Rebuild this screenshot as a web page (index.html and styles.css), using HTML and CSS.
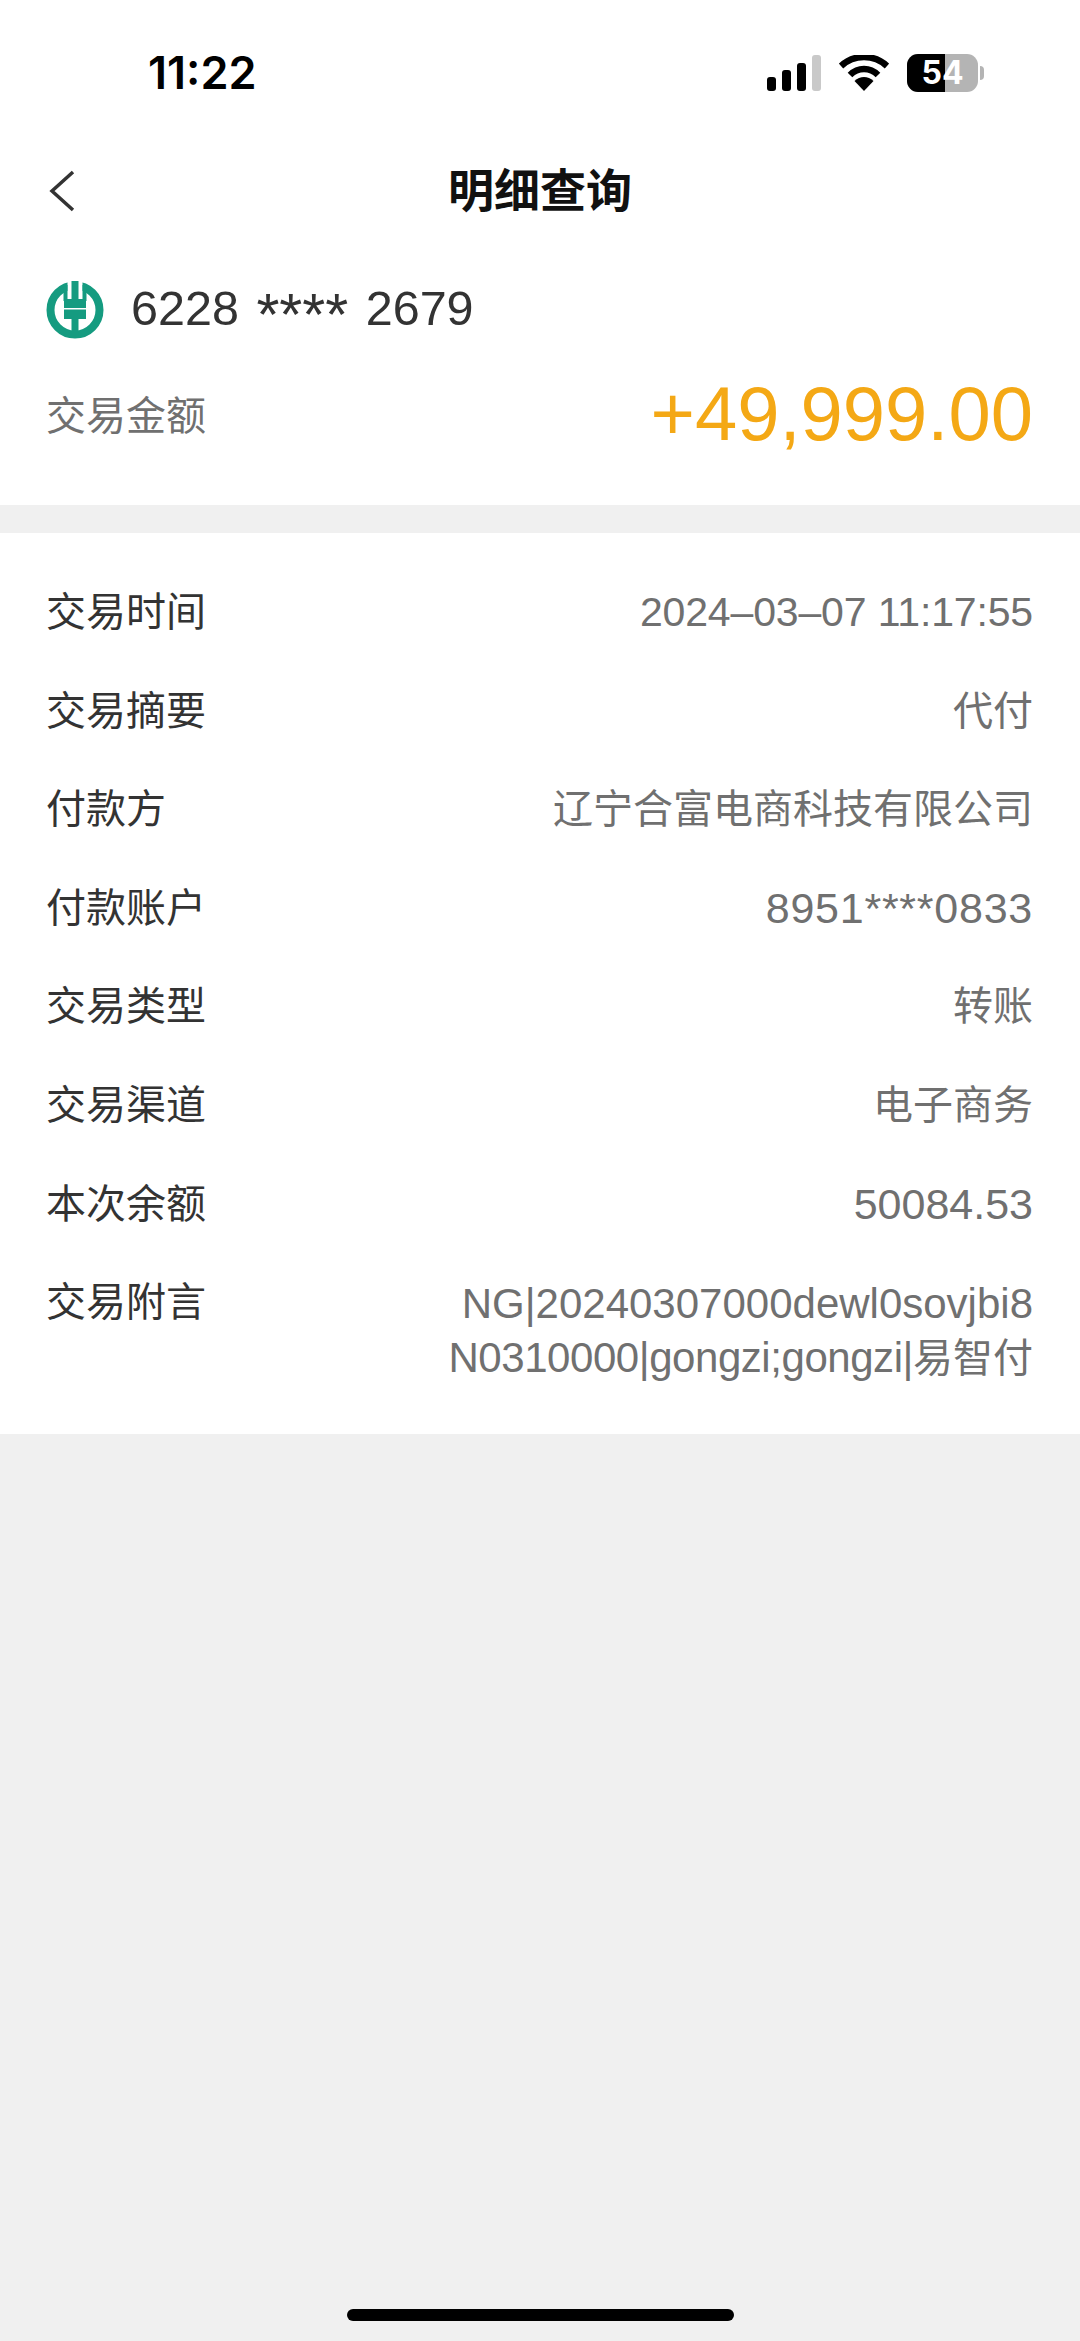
FILE: index.html
```html
<!DOCTYPE html>
<html lang="zh-CN">
<head>
    <meta charset="UTF-8">
    <meta name="viewport" content="width=device-width, initial-scale=1.0">
    <title>明细查询</title>
    <link rel="stylesheet" href="styles.css">
</head>
<body>
    <div class="status-bar">
        <span class="clock">11:22</span>
        <div class="status-icons">
            <svg class="signal" width="54" height="36" viewBox="0 0 54 36">
                <rect x="0" y="22" width="9" height="14" rx="3" fill="#000"/>
                <rect x="15" y="15" width="9" height="21" rx="3" fill="#000"/>
                <rect x="30" y="8" width="9" height="28" rx="3" fill="#000"/>
                <rect x="45" y="0" width="9" height="36" rx="3" fill="#c9c9c9"/>
            </svg>
            <svg class="wifi" width="50" height="36" viewBox="0 0 50 36">
                <path d="M2 11C15 -1 35 -1 48 11" fill="none" stroke="#000" stroke-width="6.5"/>
                <path d="M11 20C19 12 31 12 39 20" fill="none" stroke="#000" stroke-width="6.5"/>
                <path d="M15.500 26C21 20.500 29 20.500 34.500 26L25 36Z" fill="#000"/>
            </svg>
            <div class="battery">
                <div class="battery-body">
                    <span class="battery-level" style="width: 54%"></span>
                    <span class="battery-text">54</span>
                </div>
                <span class="battery-cap"></span>
            </div>
        </div>
    </div>

    <div class="nav-bar">
        <svg class="back" width="26" height="42" viewBox="0 0 26 42">
            <path d="M24 2L3 21L24 40" fill="none" stroke="#333" stroke-width="3.500"/>
        </svg>
        <h1>明细查询</h1>
    </div>

    <div class="card summary">
        <div class="account">
            <svg class="bank-logo" width="58" height="58" viewBox="0 0 58 58">
                <circle cx="29" cy="29" r="24.500" fill="none" stroke="#159b80" stroke-width="8"/>
                <!-- white channels cut through the top of the ring -->
                <rect x="21.500" y="0" width="15" height="18" fill="#fff"/>
                <rect x="17.500" y="4" width="4" height="16" fill="#159b80"/>
                <rect x="36.500" y="4" width="4" height="16" fill="#159b80"/>
                <rect x="25.500" y="0" width="7" height="18" fill="#159b80"/>
                <rect x="18" y="18" width="22" height="9" fill="#159b80"/>
                <rect x="18" y="28.500" width="22" height="9.500" fill="#159b80"/>
                <rect x="25.500" y="38" width="7" height="17" fill="#159b80"/>
            </svg>
            <span class="card-no">6228 <span class="stars">****</span> 2679</span>
        </div>
        <div class="amount-row">
            <span class="amount-label">交易金额</span>
            <span class="amount">+49,999.00</span>
        </div>
    </div>

    <div class="card details">
        <div class="row"><span class="label">交易时间</span><span class="value date">2024–03–07 11:17:55</span></div>
        <div class="row"><span class="label">交易摘要</span><span class="value">代付</span></div>
        <div class="row"><span class="label">付款方</span><span class="value">辽宁合富电商科技有限公司</span></div>
        <div class="row"><span class="label">付款账户</span><span class="value num account-no">8951****0833</span></div>
        <div class="row"><span class="label">交易类型</span><span class="value">转账</span></div>
        <div class="row"><span class="label">交易渠道</span><span class="value">电子商务</span></div>
        <div class="row"><span class="label">本次余额</span><span class="value num">50084.53</span></div>
        <div class="row"><span class="label">交易附言</span><span class="value note">NG|20240307000dewl0sovjbi8<br><span class="note-tight">N0310000|gongzi;gongzi|</span><span class="note-cjk">易智付</span></span></div>
    </div>

    <div class="home-indicator"></div>
</body>
</html>
```

FILE: styles.css
```css
html, body {
    height: 100%;
}

body {
    font-family: "Liberation Sans", "Noto Sans CJK SC", sans-serif;
    background-color: #f0f0f0;
    margin: 0;
    padding: 0;
    display: flex;
    flex-direction: column;
}

.status-bar {
    background-color: white;
    height: 136px;
    box-sizing: border-box;
    padding: 48px 96px 0 148px;
    display: flex;
    justify-content: space-between;
    align-items: flex-start;
}

.clock {
    font-family: Inter, sans-serif;
    font-size: 45px;
    line-height: 50px;
    font-weight: 600;
    color: #000;
}

.status-icons {
    display: flex;
    align-items: center;
    gap: 18px;
    padding-top: 6px;
}

.battery {
    display: flex;
    align-items: center;
    gap: 2px;
}

.battery-body {
    position: relative;
    width: 71px;
    height: 38px;
    border-radius: 11px;
    background-color: #b4b4b4;
    overflow: hidden;
}

.battery-level {
    display: block;
    height: 100%;
    background-color: #000;
}

.battery-text {
    position: absolute;
    inset: 0;
    text-align: center;
    font-family: Inter, sans-serif;
    font-size: 32px;
    line-height: 38px;
    font-weight: 700;
    color: white;
}

.battery-cap {
    width: 4px;
    height: 14px;
    border-radius: 0 7px 7px 0;
    background-color: #b4b4b4;
}

.nav-bar {
    background-color: white;
    height: 108px;
    padding-bottom: 6px;
    box-sizing: border-box;
    position: relative;
    display: flex;
    align-items: center;
    justify-content: center;
}

.back {
    position: absolute;
    left: 49px;
    top: 34px;
}

h1 {
    margin: 0;
    font-size: 46px;
    font-weight: 700;
    color: #111;
}

.card {
    background-color: white;
}

.summary {
    height: 261px;
    box-sizing: border-box;
    padding: 34px 46px 0;
    margin-bottom: 28px;
}

.account {
    display: flex;
    align-items: center;
    gap: 27px;
    height: 60px;
}

.bank-logo {
    margin-top: 3px;
}

.card-no {
    font-size: 48.500px;
    line-height: 60px;
    word-spacing: 4px;
    color: #333;
}

.stars {
    font-size: 59px;
    line-height: 40px;
    vertical-align: -10px;
}

.amount-row {
    display: flex;
    justify-content: space-between;
    align-items: center;
    margin-top: 29px;
    height: 92px;
    padding-right: 1px;
}

.amount-label {
    font-size: 40px;
    color: #707070;
}

.amount {
    font-size: 76px;
    color: #f4a815;
}

.details {
    padding: 30px 47px 25px 46px;
}

.row {
    display: flex;
    justify-content: space-between;
    align-items: flex-start;
    padding: 24px 0;
    font-size: 40px;
    line-height: 50.600px;
}

.label {
    color: #333;
}

.value {
    color: #707070;
    text-align: right;
}

.date {
    font-size: 41px;
    letter-spacing: -0.150px;
}

.num {
    font-size: 43px;
}

.account-no {
    letter-spacing: 0.750px;
}

.note {
    font-size: 42px;
    line-height: 54px;
}

.note-tight {
    letter-spacing: -0.450px;
}

.note-cjk {
    font-size: 40px;
}

.home-indicator {
    position: fixed;
    left: 347px;
    bottom: 20px;
    width: 387px;
    height: 12px;
    border-radius: 6px;
    background-color: #000;
}
```
